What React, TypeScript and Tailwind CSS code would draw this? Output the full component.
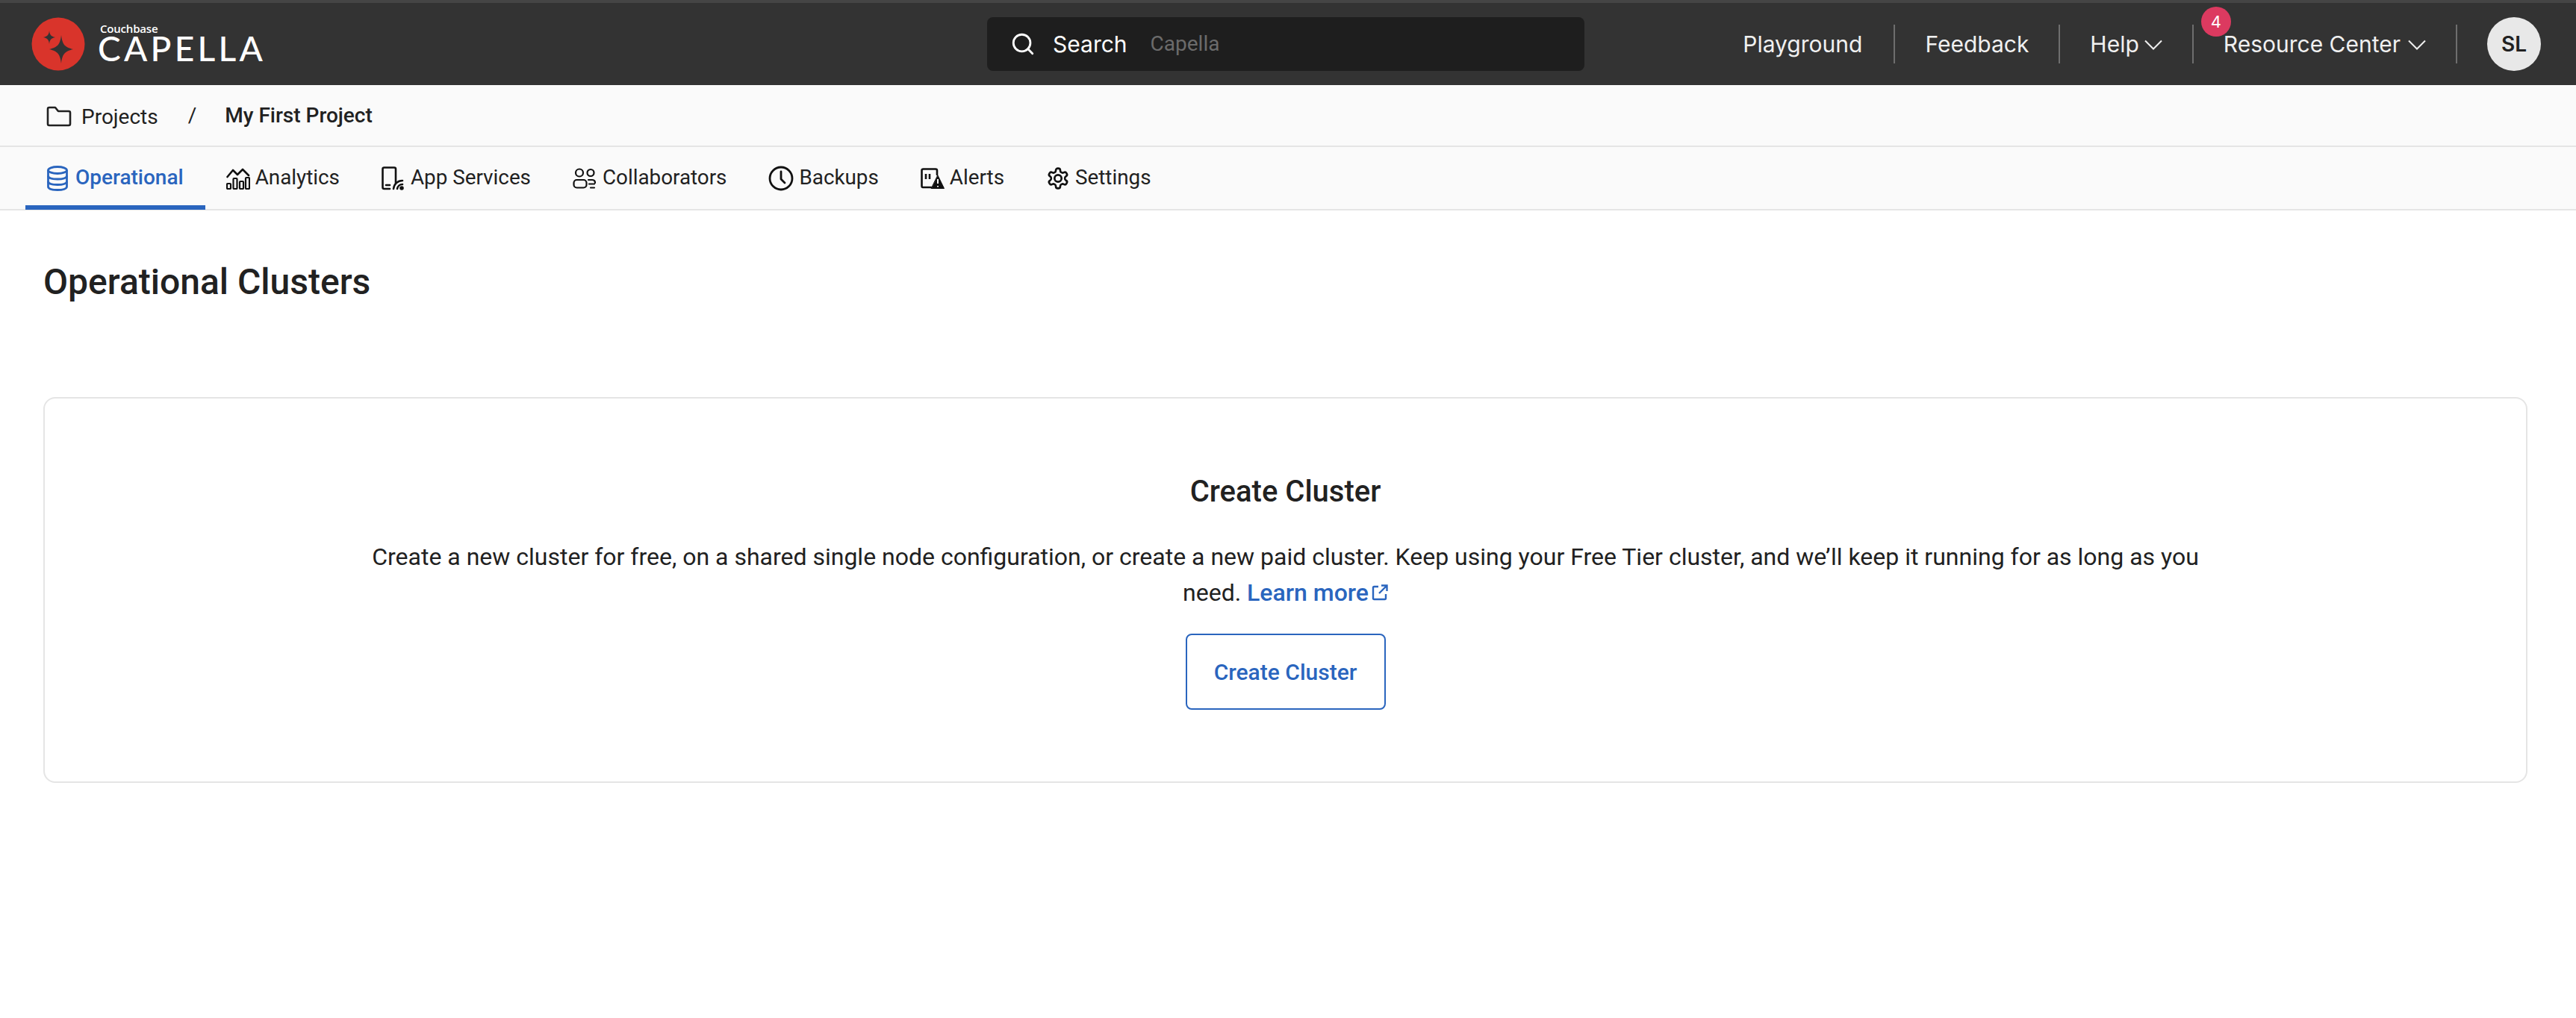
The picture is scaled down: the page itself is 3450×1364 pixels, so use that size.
import { Search } from 'lucide-react';
import type { ReactNode } from 'react';

const BLUE = 'text-[#2a65be]';

function Logo() {
  return (
    <div className="flex items-center gap-[17px]">
      <svg width="72" height="72" viewBox="0 0 72 72">
        <circle cx="36" cy="36" r="35.5" fill="#d9342b" />
        <path d="M40 24 C41.5 36 44 40 56 43 C44 46 41.5 50 40 62 C38.5 50 36 46 24 43 C36 40 38.5 36 40 24 Z" fill="#333333" />
        <path d="M24 18 C24.6 23.5 26 25.5 32 27 C26 28.5 24.6 30.5 24 36 C23.4 30.5 22 28.5 16 27 C22 25.5 23.4 23.5 24 18 Z" fill="#333333" />
      </svg>
      <div className="flex flex-col">
        <span className="text-[15px] leading-[16px] font-semibold text-white font-['Open_Sans',sans-serif] ml-[3px] mt-[-4px] tracking-[-0.2px]">Couchbase</span>
        <span className="text-[46px] leading-[38px] text-white font-medium tracking-[4.3px] font-['Lato',sans-serif]">CAPELLA</span>
      </div>
    </div>
  );
}

function Divider() {
  return <div className="w-[2px] h-[52px] bg-[#6e6e6e]" />;
}

function Chevron() {
  return (
    <svg width="24" height="14" viewBox="0 0 24 14" fill="none" stroke="#f0f0f0" strokeWidth="2" className="mt-[2px]">
      <path d="M1 1.5 L12 12.5 L23 1.5" />
    </svg>
  );
}

function Header() {
  return (
    <header className="h-[114px] bg-[#333333] border-t-[4px] border-[#454545] flex items-center pl-[42px] pr-[47px] relative font-['Inter',sans-serif]">
      <div className="w-[1280px]"><Logo /></div>
      <div className="w-[800px] h-[72px] rounded-[8px] bg-[#1e1e1e] flex items-center pl-[31px]">
        <Search size={34} strokeWidth={2} className="text-white" />
        <span className="text-[30px] text-white ml-[23px]">Search</span>
        <span className="text-[28px] text-[#6b6b6b] ml-[31px] font-['Roboto',sans-serif]">Capella</span>
      </div>
      <nav className="flex items-center ml-auto text-[#f0f0f0] text-[30px]">
        <span className="mr-[2px]">Playground</span>
        <div className="mx-[40px]"><Divider /></div>
        <span>Feedback</span>
        <div className="mx-[40px]"><Divider /></div>
        <span className="flex items-center gap-[7px]">Help <Chevron /></span>
        <div className="ml-[40px] mr-[40px] relative">
          <Divider />
          <span className="absolute left-[12px] top-[-24px] w-[40px] h-[40px] rounded-full bg-[#dc3a60] text-white text-[22px] leading-[40px] text-center">4</span>
        </div>
        <span className="flex items-center gap-[10px]">Resource Center <Chevron /></span>
        <div className="ml-[40px] mr-[40px]"><Divider /></div>
        <div className="w-[72px] h-[72px] rounded-full bg-[#e8e8e8] text-[#212121] text-[28px] font-semibold flex items-center justify-center">SL</div>
      </nav>
    </header>
  );
}

function Breadcrumb() {
  return (
    <div className="h-[83px] bg-[#fafafa] border-b-[2px] border-[#e5e5e5] flex items-center pl-[62px] text-[#212121] text-[28px]">
      <svg width="34" height="28" viewBox="0 0 34 28" fill="none" stroke="#212121" strokeWidth="2.6" strokeLinejoin="round" className="mt-[2px]">
        <path d="M2 4 Q2 2 4 2 H12 L16 7 H30 Q32 7 32 9 V24 Q32 26 30 26 H4 Q2 26 2 24 Z" />
      </svg>
      <span className="ml-[13px] mt-[5px]">Projects</span>
      <span className="ml-[40px]">/</span>
      <span className="ml-[38px] font-medium">My First Project</span>
    </div>
  );
}

const IC = { fill: 'none', stroke: '#111111', strokeWidth: 2.6, strokeLinecap: 'round', strokeLinejoin: 'round' } as const;

function DbIcon() {
  return (
    <svg width="28" height="34" viewBox="0 0 28 34" fill="none" stroke="#2a65be" strokeWidth="2.8">
      <ellipse cx="14" cy="6" rx="12.5" ry="4.5" />
      <path d="M1.5 6 V28 C1.5 31 7 32.5 14 32.5 C21 32.5 26.5 31 26.5 28 V6" />
      <path d="M1.5 13.5 C1.5 16.5 7 18 14 18 C21 18 26.5 16.5 26.5 13.5" />
      <path d="M1.5 21 C1.5 24 7 25.5 14 25.5 C21 25.5 26.5 24 26.5 21" />
    </svg>
  );
}

function ChartIcon() {
  return (
    <svg width="32" height="30" viewBox="0 0 32 30" {...IC} strokeWidth={2.2}>
      <path d="M1.5 13 L9 4 L15 10 L22 3 L30 11" strokeWidth={2.6} />
      <rect x="1" y="22" width="5" height="7" rx="1" />
      <rect x="9.5" y="15" width="5" height="14" rx="1" />
      <rect x="18" y="19" width="5" height="10" rx="1" />
      <rect x="26" y="14" width="5" height="15" rx="1" />
    </svg>
  );
}

function DeviceIcon() {
  return (
    <svg width="30" height="32" viewBox="0 0 30 32" {...IC}>
      <path d="M19 22 V3.5 Q19 1.5 17 1.5 H3.5 Q1.5 1.5 1.5 3.5 V28 Q1.5 30 3.5 30 H11" />
      <path d="M6 25 H11" />
      <path d="M16 30 A12 12 0 0 1 28 19" />
      <path d="M21 30 A7 7 0 0 1 28 24" />
      <circle cx="27" cy="29" r="1.5" fill="#111111" />
    </svg>
  );
}

function PeopleIcon() {
  return (
    <svg width="31" height="28" viewBox="0 0 31 28" {...IC} strokeWidth={2.2}>
      <circle cx="9" cy="6.5" r="5" />
      <circle cx="24" cy="6.5" r="4.5" />
      <rect x="1.5" y="16" width="17" height="10.5" rx="4" />
      <path d="M21 16 H26 Q30 16 30 20 M24 26.5 H29 M22 21.5 H29" />
    </svg>
  );
}

function ClockIcon() {
  return (
    <svg width="34" height="34" viewBox="0 0 34 34" {...IC} strokeWidth={2.8}>
      <circle cx="17" cy="17" r="15" />
      <path d="M17 8 V18 L22 23" />
    </svg>
  );
}

function AlertIcon() {
  return (
    <svg width="32" height="28" viewBox="0 0 32 28" {...IC}>
      <path d="M14 26 H3 Q1.5 26 1.5 24 V3.5 Q1.5 1.5 3.5 1.5 H20 Q22 1.5 22 3.5 V9" />
      <path d="M7 8 V15 M12 8 V15" strokeLinecap="butt" />
      <path d="M23 10 L31.5 27.5 H14.5 Z" fill="#111111" stroke="#111111" strokeWidth={1} />
      <path d="M23 15 V21 M23 24 V25.5" stroke="#fafafa" strokeWidth={2} strokeLinecap="butt" />
    </svg>
  );
}

function GearIcon() {
  return (
    <svg width="32" height="32" viewBox="0 0 24 24" fill="none" stroke="#111111" strokeWidth="2" strokeLinecap="round" strokeLinejoin="round">
      <path d="M12.22 2h-.44a2 2 0 0 0-2 2v.18a2 2 0 0 1-1 1.73l-.43.25a2 2 0 0 1-2 0l-.15-.08a2 2 0 0 0-2.73.73l-.22.38a2 2 0 0 0 .73 2.73l.15.1a2 2 0 0 1 1 1.72v.51a2 2 0 0 1-1 1.74l-.15.09a2 2 0 0 0-.73 2.73l.22.38a2 2 0 0 0 2.73.73l.15-.08a2 2 0 0 1 2 0l.43.25a2 2 0 0 1 1 1.73V20a2 2 0 0 0 2 2h.44a2 2 0 0 0 2-2v-.18a2 2 0 0 1 1-1.73l.43-.25a2 2 0 0 1 2 0l.15.08a2 2 0 0 0 2.73-.73l.22-.39a2 2 0 0 0-.73-2.73l-.15-.08a2 2 0 0 1-1-1.74v-.5a2 2 0 0 1 1-1.74l.15-.09a2 2 0 0 0 .73-2.73l-.22-.38a2 2 0 0 0-2.73-.73l-.15.08a2 2 0 0 1-2 0l-.43-.25a2 2 0 0 1-1-1.73V4a2 2 0 0 0-2-2z" />
      <circle cx="12" cy="12" r="3.5" />
    </svg>
  );
}

function Tab({ icon, label, active, gap }: { icon: ReactNode; label: string; active?: boolean; gap: string }) {
  return (
    <div className={`h-[83px] flex items-center ${gap} relative ${active ? `px-[29px] text-[28px] ${BLUE} font-medium` : 'px-[28px] text-[27.8px] text-[#212121]'}`}>
      {icon}
      <span className="mt-[-1px]">{label}</span>
      {active && <div className="absolute left-0 right-0 bottom-[-1px] h-[6px] bg-[#2a65be]" />}
    </div>
  );
}

function Tabs() {
  return (
    <div className="h-[85px] bg-[#fafafa] border-b-[2px] border-[#e5e5e5] flex pl-[34px]">
      <Tab active icon={<DbIcon />} label="Operational" gap="gap-[10px]" />
      <Tab icon={<ChartIcon />} label="Analytics" gap="gap-[7px]" />
      <Tab icon={<DeviceIcon />} label="App Services" gap="gap-[9px]" />
      <Tab icon={<PeopleIcon />} label="Collaborators" gap="gap-[9px]" />
      <Tab icon={<ClockIcon />} label="Backups" gap="gap-[7px]" />
      <Tab icon={<AlertIcon />} label="Alerts" gap="gap-[7px]" />
      <Tab icon={<GearIcon />} label="Settings" gap="gap-[7px]" />
    </div>
  );
}

function ClusterCard() {
  return (
    <section className="mt-[124px] mx-[58px] w-[3327px] h-[517px] border-[2px] border-[#e5e5e5] rounded-[16px] flex flex-col items-center pt-[100px] text-[#212121]">
      <h2 className="text-[40px] leading-[50px] font-medium">Create Cluster</h2>
      <p className="mt-[38px] w-[2500px] text-[32px] leading-[48px] text-center">
        Create a new cluster for free, on a shared single node configuration, or create a new paid cluster. Keep using your Free Tier cluster, and we’ll keep it running for as long as you need.{' '}
        <span className={`${BLUE} font-medium`}>
          Learn more
          <svg className="inline ml-[4px] mb-[6px]" width="22" height="22" viewBox="0 0 22 22" fill="none" stroke="#2a65be" strokeWidth="2.4">
            <path d="M9 3 H3.5 Q2 3 2 4.5 V18.5 Q2 20 3.5 20 H17.5 Q19 20 19 18.5 V13" />
            <path d="M10 12 L20 2 M13 1.5 H20.5 V9" />
          </svg>
        </span>
      </p>
      <button className={`mt-[31px] w-[268px] h-[102px] rounded-[8px] border-[2px] border-[#2a65be] bg-white text-[30px] font-medium ${BLUE}`}>
        Create Cluster
      </button>
    </section>
  );
}

export default function App() {
  return (
    <div className="w-[3450px] h-[1364px] bg-white overflow-hidden font-['Roboto',sans-serif]">
      <Header />
      <Breadcrumb />
      <Tabs />
      <h1 className="pl-[58px] pt-[66px] text-[48px] leading-[60px] font-medium text-[#212121]">Operational Clusters</h1>
      <ClusterCard />
    </div>
  );
}
